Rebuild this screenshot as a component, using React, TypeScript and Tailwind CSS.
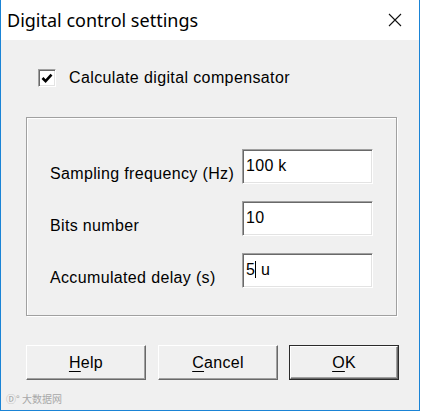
import React from "react";

const font = { fontFamily: '"Liberation Sans", Arial, sans-serif' };

function Field({ label, value, caret }: { label: string; value: string; caret?: boolean }) {
  return (
    <div className="grid h-[35px] grid-cols-[192px_131px] items-end">
      <span className="text-[16px] leading-[20px] tracking-[0.35px] text-black">{label}</span>
      <div className="h-[35px] w-[131px] border border-t-[#a0a0a0] border-l-[#a0a0a0] border-r-white border-b-white bg-white shadow-[inset_1px_1px_0_#696969,inset_-1px_-1px_0_#e3e3e3]">
        <div className="flex pl-[3px] pt-[6px] text-[16px] leading-[20px] tracking-[0.3px] text-black">
          {caret ? (
            <>
              <span>5</span>
              <span className="mt-[1px] h-[17px] w-[1px] bg-black" />
              <span>&nbsp;u</span>
            </>
          ) : (
            <span className="whitespace-pre">{value}</span>
          )}
        </div>
      </div>
    </div>
  );
}

function Button({ width, first, rest, isDefault }: { width: string; first: string; rest: string; isDefault?: boolean }) {
  return (
    <div className={`${width} h-[35px] ${isDefault ? "border border-[#2b2b2b]" : ""}`}>
      <div className="flex h-full w-full items-center justify-center border border-t-white border-l-white border-r-[#696969] border-b-[#696969] bg-[#f0f0f0] shadow-[inset_-1px_-1px_0_#a0a0a0] text-[16px] tracking-[0.3px] text-black">
        <span className="underline underline-offset-[3px] decoration-1">{first}</span>
        <span>{rest}</span>
      </div>
    </div>
  );
}

export default function App() {
  return (
    <div className="h-[413px] w-[421px] bg-white" style={font}>
      <div className="flex h-[411px] w-[420px] flex-col border-x border-b border-[#1a84d6]">
        <div className="flex h-[40px] shrink-0 items-center justify-between bg-white pl-[6px] pr-[17px]">
          <span
            className="text-[18px] text-black"
            style={{ fontFamily: '"Noto Sans", "Open Sans", sans-serif' }}
          >
            Digital control settings
          </span>
          <svg width="14" height="14" viewBox="0 0 14 14">
            <path d="M1 1L13 13M13 1L1 13" stroke="#111" strokeWidth="1.1" fill="none" />
          </svg>
        </div>

        <div className="relative flex flex-1 flex-col bg-[#f0f0f0] pl-[25px]">
          <div className="ml-[12px] mt-[28px] flex h-[20px] items-center gap-[13px]">
            <div className="flex h-[18px] w-[18px] items-center justify-center border border-t-[#a0a0a0] border-l-[#a0a0a0] border-r-white border-b-white bg-white shadow-[inset_1px_1px_0_#696969,inset_-1px_-1px_0_#e3e3e3]">
              <svg width="12" height="12" viewBox="0 0 12 12">
                <path d="M1.5 6L4.6 9.2L10.5 2.6" stroke="#000" strokeWidth="2.6" fill="none" />
              </svg>
            </div>
            <span className="text-[16px] tracking-[0.38px] text-black">Calculate digital compensator</span>
          </div>

          <div className="mt-[29px] flex h-[199px] w-[371px] flex-col gap-[17px] border border-[#a0a0a0] pl-[23px] pt-[31px] shadow-[inset_1px_1px_0_#fff,1px_1px_0_#fff]">
            <Field label="Sampling frequency (Hz)" value="100 k" />
            <Field label="Bits number" value="10" />
            <Field label="Accumulated delay (s)" value="5 u" caret />
          </div>

          <div className="mt-[29px] flex gap-[12px]">
            <Button width="w-[120px]" first="H" rest="elp" />
            <Button width="w-[120px]" first="C" rest="ancel" />
            <div className="-ml-[1px]">
              <Button width="w-[110px]" first="O" rest="K" isDefault />
            </div>
          </div>

          <div
            className="absolute bottom-[4px] left-[5px] text-[10px] text-[#a8a8a8]"
            style={{ fontFamily: '"Noto Sans CJK SC", sans-serif' }}
          >
            Ⓓ° 大数据网
          </div>
        </div>
      </div>
    </div>
  );
}
